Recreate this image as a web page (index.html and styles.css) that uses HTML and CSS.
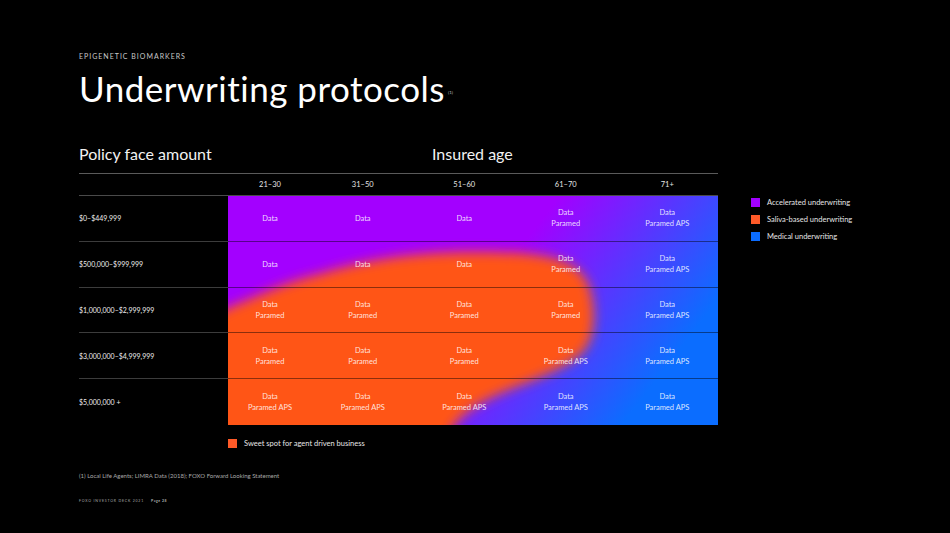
FILE: index.html
```html
<!DOCTYPE html>
<html>
<head>
<meta charset="utf-8">
<link rel="stylesheet" href="styles.css">
</head>
<body>
<div class="slide">
  <div class="kicker">EPIGENETIC BIOMARKERS</div>
  <h1 class="title">Underwriting protocols<sup class="ref">(1)</sup></h1>

  <div class="heads">
    <span>Policy face amount</span>
    <span>Insured age</span>
  </div>

  <div class="thead">
    <div class="thead-blank"></div>
    <div class="cols">
      <span>21–30</span><span>31–50</span><span>51–60</span><span>61–70</span><span>71+</span>
    </div>
  </div>

  <div class="tbody">
    <div class="labels">
      <div class="label">$0–$449,999</div>
      <div class="label">$500,000–$999,999</div>
      <div class="label">$1,000,000–$2,999,999</div>
      <div class="label">$3,000,000–$4,999,999</div>
      <div class="label">$5,000,000 +</div>
    </div>

    <div class="grid">
      <svg class="grid-bg" viewBox="0 0 490 229" preserveAspectRatio="none" aria-hidden="true">
        <defs>
          <linearGradient id="pb" gradientUnits="userSpaceOnUse" x1="320" y1="15" x2="470" y2="130">
            <stop offset="0" stop-color="#a300ff"/>
            <stop offset="1" stop-color="#0b6dff"/>
          </linearGradient>
          <filter id="soft" x="-20%" y="-20%" width="140%" height="140%">
            <feGaussianBlur stdDeviation="6"/>
          </filter>
        </defs>
        <rect x="0" y="0" width="490" height="229" fill="url(#pb)"/>
        <path filter="url(#soft)" fill="#ff5419"
          d="M -30,128 L 0,112 C 30,100 60,85 92,78 C 130,66 180,56 245,56 C 310,56 350,60 361,90 C 369,115 367,140 356,155 C 340,172 307,183 280,194 C 252,206 228,218 218,245 L -30,245 Z"/>
      </svg>
      <div class="row">
        <div class="cell">Data</div><div class="cell">Data</div><div class="cell">Data</div>
        <div class="cell">Data<br>Paramed</div><div class="cell">Data<br>Paramed APS</div>
      </div>
      <div class="row">
        <div class="cell">Data</div><div class="cell">Data</div><div class="cell">Data</div>
        <div class="cell">Data<br>Paramed</div><div class="cell">Data<br>Paramed APS</div>
      </div>
      <div class="row">
        <div class="cell">Data<br>Paramed</div><div class="cell">Data<br>Paramed</div><div class="cell">Data<br>Paramed</div>
        <div class="cell">Data<br>Paramed</div><div class="cell">Data<br>Paramed APS</div>
      </div>
      <div class="row">
        <div class="cell">Data<br>Paramed</div><div class="cell">Data<br>Paramed</div><div class="cell">Data<br>Paramed</div>
        <div class="cell">Data<br>Paramed APS</div><div class="cell">Data<br>Paramed APS</div>
      </div>
      <div class="row">
        <div class="cell">Data<br>Paramed APS</div><div class="cell">Data<br>Paramed APS</div><div class="cell">Data<br>Paramed APS</div>
        <div class="cell">Data<br>Paramed APS</div><div class="cell">Data<br>Paramed APS</div>
      </div>
    </div>

    <div class="legend">
      <div class="legend-item"><span class="swatch purple"></span>Accelerated underwriting</div>
      <div class="legend-item"><span class="swatch orange"></span>Saliva-based underwriting</div>
      <div class="legend-item"><span class="swatch blue"></span>Medical underwriting</div>
    </div>
  </div>

  <div class="sweet"><span class="swatch orange"></span>Sweet spot for agent driven business</div>

  <div class="footnote">(1) Local Life Agents; LIMRA Data (2018); FOXO Forward Looking Statement</div>

  <div class="footer"><span class="deck">FOXO INVESTOR DECK 2021</span><span class="page">Page 28</span></div>
</div>
</body>
</html>
```

FILE: styles.css
```css
html, body {
  margin: 0;
  padding: 0;
  background: #000;
}

.slide {
  width: 950px;
  height: 533px;
  box-sizing: border-box;
  padding: 52px 0 0 79px;
  background: #000;
  color: #fff;
  font-family: Lato, "Open Sans", "Liberation Sans", sans-serif;
  overflow: hidden;
}

.kicker {
  font-size: 7px;
  letter-spacing: 1px;
  color: #c8c8c8;
  line-height: 9px;
}

.title {
  margin: 6px 0 0 0;
  font-weight: 400;
  font-size: 35px;
  line-height: 42px;
  color: #fff;
  letter-spacing: 0.5px;
}

.ref {
  font-size: 4.5px;
  vertical-align: top;
  position: relative;
  top: 5px;
  margin-left: 3px;
  color: #bbb;
  letter-spacing: 0;
}

.heads {
  margin-top: 35px;
  display: grid;
  grid-template-columns: 353px auto;
  font-size: 16px;
  line-height: 20px;
  color: #f2f2f2;
  width: 639px;
}

.thead {
  margin-top: 9px;
  width: 639px;
  display: flex;
  border-top: 1.5px solid #5a5a5a;
  border-bottom: 1px solid #4a4a4a;
  height: 21px;
  box-sizing: content-box;
}

.thead-blank {
  width: 149px;
  flex: none;
}

.cols {
  flex: 1;
  display: grid;
  grid-template-columns: 84px repeat(4, 1fr);
  align-items: center;
  text-align: center;
  font-size: 7.5px;
  color: #e6e6e6;
}

.tbody {
  display: flex;
  align-items: flex-start;
}

.labels {
  width: 149px;
  flex: none;
  height: 229px;
  display: grid;
  grid-template-rows: repeat(5, 1fr);
}

.label {
  display: flex;
  align-items: center;
  font-size: 7px;
  color: #ededed;
  border-bottom: 1px solid #3c3c3c;
}

.label:last-child {
  border-bottom: none;
}

.grid {
  position: relative;
  width: 490px;
  height: 229px;
  flex: none;
  display: grid;
  grid-template-rows: repeat(5, 1fr);
}

.grid-bg {
  position: absolute;
  inset: 0;
  width: 100%;
  height: 100%;
  z-index: 0;
}

.row {
  position: relative;
  z-index: 1;
  display: grid;
  grid-template-columns: 84px repeat(4, 1fr);
  border-bottom: 1px solid rgba(0, 0, 0, 0.45);
}

.row:last-child {
  border-bottom: none;
}

.cell {
  display: flex;
  align-items: center;
  justify-content: center;
  text-align: center;
  font-size: 7.5px;
  line-height: 11px;
  color: rgba(255, 255, 255, 0.85);
}

.legend {
  margin-left: 33px;
  padding-top: 2px;
  display: flex;
  flex-direction: column;
  gap: 8px;
}

.legend-item,
.sweet {
  display: flex;
  align-items: center;
  font-size: 7.5px;
  color: #e6e6e6;
  line-height: 9px;
}

.swatch {
  width: 9px;
  height: 9px;
  flex: none;
  margin-right: 7px;
}

.purple { background: #a100ff; }
.orange { background: #ff5a28; }
.blue { background: #0b6cff; }

.sweet {
  margin-top: 14px;
  padding-left: 149px;
}

.footnote {
  margin-top: 24px;
  font-size: 6px;
  color: #a8a8a8;
}

.footer {
  margin-top: 20px;
  font-size: 3.5px;
  letter-spacing: 0.8px;
  color: #aaa;
  display: flex;
  gap: 7px;
}

.page {
  font-weight: 700;
  letter-spacing: 0.5px;
}
```
